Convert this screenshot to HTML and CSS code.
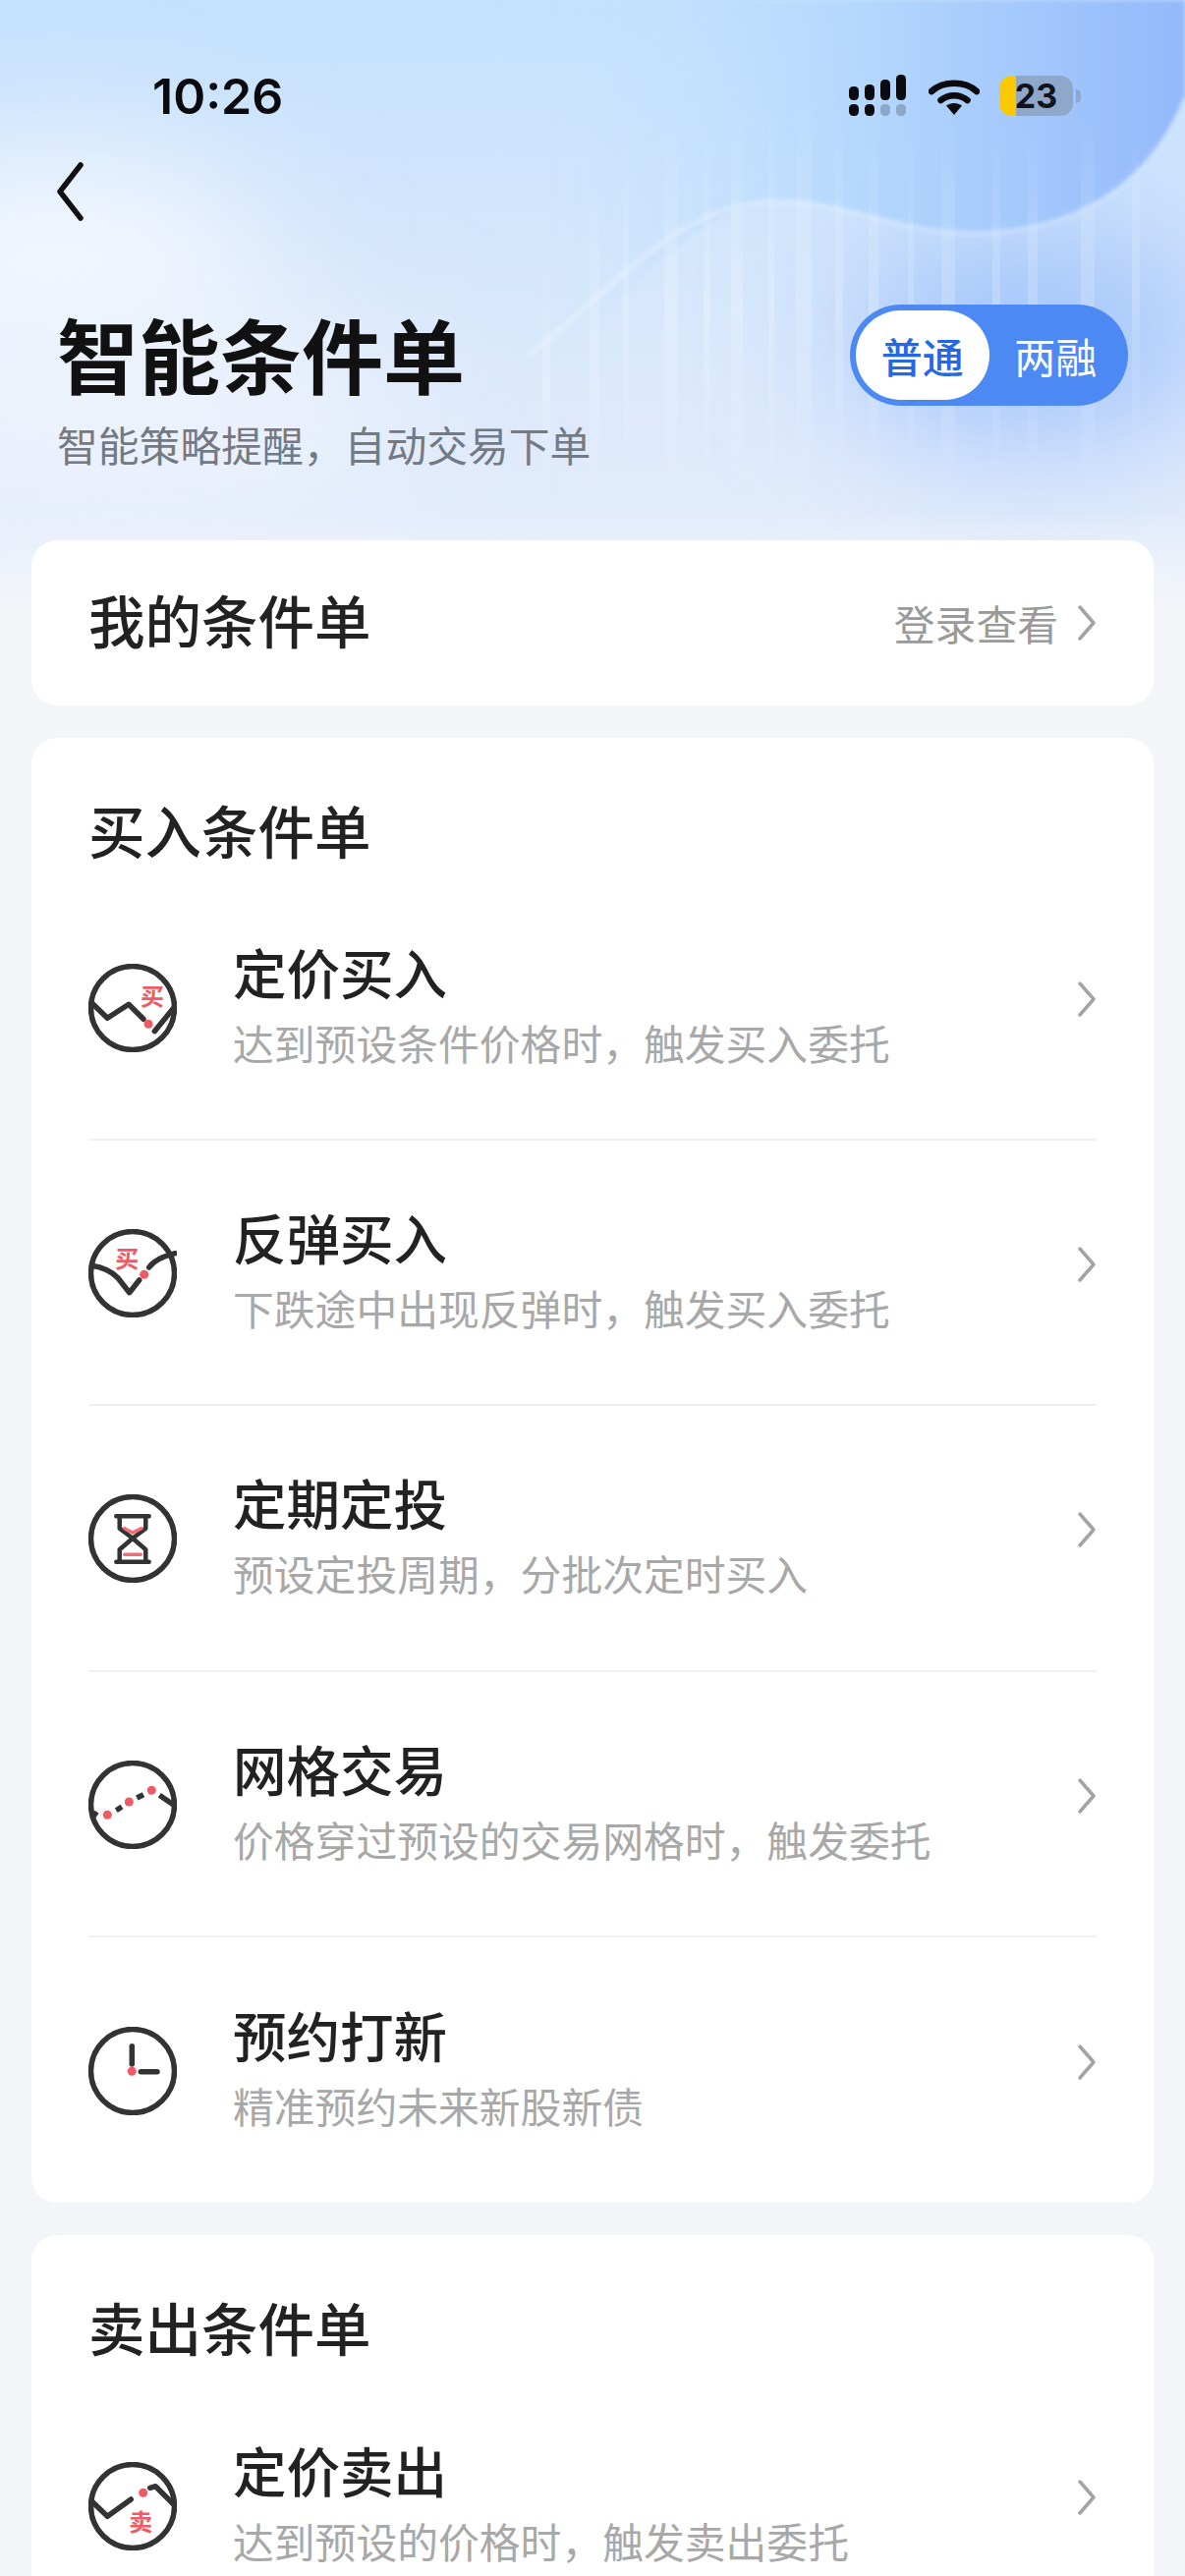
FILE: index.html
```html
<!DOCTYPE html>
<html lang="zh-CN">
<head>
  <meta charset="UTF-8">
  <title>智能条件单</title>
  <link rel="stylesheet" href="styles.css">
</head>
<body>
  <svg class="hero-bg" width="1206" height="640" viewBox="0 0 1206 640">
    <defs>
      <linearGradient id="base" x1="0" y1="0" x2="0" y2="1">
        <stop offset="0" stop-color="#c4e1fc"/>
        <stop offset="0.3" stop-color="#d0e5fc"/>
        <stop offset="0.62" stop-color="#dce9fb"/>
        <stop offset="1" stop-color="#e6eefb"/>
      </linearGradient>
      <linearGradient id="corner" x1="0" y1="0" x2="1" y2="0">
        <stop offset="0" stop-color="#c6e3fe" stop-opacity="0"/>
        <stop offset="0.55" stop-color="#b0d4fd"/>
        <stop offset="1" stop-color="#93b9fb"/>
      </linearGradient>
      <linearGradient id="stripe" x1="0" y1="0" x2="0" y2="1">
        <stop offset="0" stop-color="#fff" stop-opacity="0"/>
        <stop offset="0.5" stop-color="#fff" stop-opacity="0.2"/>
        <stop offset="1" stop-color="#fff" stop-opacity="0"/>
      </linearGradient>
      <linearGradient id="fadeout" x1="0" y1="0" x2="0" y2="1">
        <stop offset="0" stop-color="#f4f5f9" stop-opacity="0"/>
        <stop offset="1" stop-color="#f4f5f9"/>
      </linearGradient>
      <filter id="blur80" filterUnits="userSpaceOnUse" x="-400" y="-400" width="2000" height="1400"><feGaussianBlur stdDeviation="70"/></filter>
      <filter id="blur2" filterUnits="userSpaceOnUse" x="-50" y="-50" width="1300" height="700"><feGaussianBlur stdDeviation="2"/></filter>
    </defs>
    <rect width="1206" height="640" fill="url(#base)"/>
    <ellipse cx="60" cy="270" rx="210" ry="110" fill="#f4f8ff" filter="url(#blur80)"/>
    <ellipse cx="120" cy="420" rx="300" ry="100" fill="#eef3fc" filter="url(#blur80)"/>
    <ellipse cx="1050" cy="340" rx="190" ry="110" fill="#a3c4fb" filter="url(#blur80)"/>
    <path d="M560 0H1206V100C1170 190 1090 240 980 237C910 235 860 205 792 205C720 205 660 280 600 340L560 340Z" fill="url(#corner)" filter="url(#blur2)"/>
    <path d="M540 360C630 290 690 205 792 205C860 205 910 235 980 237C1090 240 1170 190 1206 100" fill="none" stroke="#fff" stroke-opacity="0.28" stroke-width="5" filter="url(#blur2)"/>
    <g fill="url(#stripe)">
      <rect x="552" y="270" width="8" height="240"/>
      <rect x="600" y="180" width="10" height="340"/>
      <rect x="634" y="130" width="6" height="380"/>
      <rect x="676" y="120" width="14" height="380"/>
      <rect x="716" y="110" width="7" height="400"/>
      <rect x="744" y="100" width="12" height="420"/>
      <rect x="782" y="100" width="6" height="420"/>
      <rect x="810" y="90" width="16" height="430"/>
      <rect x="850" y="110" width="8" height="400"/>
      <rect x="884" y="120" width="10" height="380"/>
      <rect x="924" y="130" width="6" height="370"/>
      <rect x="958" y="120" width="14" height="400"/>
      <rect x="1010" y="130" width="8" height="370"/>
      <rect x="1046" y="120" width="10" height="380"/>
      <rect x="1100" y="110" width="14" height="400"/>
      <rect x="1152" y="130" width="8" height="340"/>
    </g>
    <rect y="520" width="1206" height="100" fill="url(#fadeout)"/>
    <rect y="620" width="1206" height="20" fill="#f4f5f9"/>
  </svg>

  <div class="status-bar">
    <span class="clock">10:26</span>
    <div class="status-icons">
      <svg class="signal" width="58" height="44" viewBox="0 0 58 44">
        <g fill="#0b0b0f">
          <rect x="0" y="12" width="10" height="14" rx="4.5"/>
          <rect x="16" y="10" width="10" height="16" rx="4.5"/>
          <rect x="32" y="5" width="10" height="21" rx="4.5"/>
          <rect x="48" y="0" width="10" height="26" rx="4.5"/>
          <rect x="0" y="30" width="10" height="12" rx="4.5"/>
          <rect x="16" y="30" width="10" height="12" rx="4.5"/>
        </g>
        <g fill="#0b0b0f" opacity="0.22">
          <rect x="32" y="30" width="10" height="12" rx="4.5"/>
          <rect x="48" y="30" width="10" height="12" rx="4.5"/>
        </g>
      </svg>
      <svg class="wifi" width="52" height="38" viewBox="0 0 52 38">
        <path d="M3 14C15 3 37 3 49 14" fill="none" stroke="#0b0b0f" stroke-width="6.5" stroke-linecap="round"/>
        <path d="M12.500 23C20 16.500 32 16.500 39.500 23" fill="none" stroke="#0b0b0f" stroke-width="6.500" stroke-linecap="round"/>
        <path d="M18 28.500C22.500 25 29.500 25 34 28.500L26 38Z" fill="#0b0b0f"/>
      </svg>
      <div class="battery"><span class="battery-num">23</span></div>
      <span class="battery-tip"></span>
    </div>
  </div>

  <div class="nav-bar">
    <svg width="30" height="60" viewBox="0 0 30 60">
      <path d="M26 3L5 30L26 57" fill="none" stroke="#111" stroke-width="5.500" stroke-linecap="round" stroke-linejoin="round"/>
    </svg>
  </div>

  <header class="hero">
    <div class="hero-text">
      <h1 class="hero-title">智能条件单</h1>
      <p class="hero-sub">智能策略提醒，自动交易下单</p>
    </div>
    <div class="toggle">
      <span class="toggle-item active">普通</span>
      <span class="toggle-item">两融</span>
    </div>
  </header>

  <main class="content">
    <section class="card my-card">
      <h2 class="card-title">我的条件单</h2>
      <div class="login-link">
        <span>登录查看</span>
        <svg class="chevron" width="20" height="38" viewBox="0 0 20 38"><path d="M3 3L17 19L3 35"/></svg>
      </div>
    </section>

    <section class="card">
      <h2 class="card-title list-title">买入条件单</h2>

      <div class="row">
        <svg class="row-icon" width="90" height="90" viewBox="0 0 90 90">
          <circle class="ring" cx="45" cy="45" r="42.500"/>
          <path class="line" d="M3.300 39.700L19.300 55.300L41 41.300L56 56.300M67.300 68.700L88.300 43"/>
          <circle class="dot" cx="61" cy="61.300" r="4.500"/>
          <text class="mark" x="65" y="41.500">买</text>
        </svg>
        <div class="row-text">
          <div class="row-title">定价买入</div>
          <div class="row-sub">达到预设条件价格时，触发买入委托</div>
        </div>
        <svg class="chevron" width="20" height="38" viewBox="0 0 20 38"><path d="M3 3L17 19L3 35"/></svg>
      </div>

      <div class="row">
        <svg class="row-icon" width="90" height="90" viewBox="0 0 90 90">
          <circle class="ring" cx="45" cy="45" r="42.500"/>
          <path class="line" d="M3.300 37.300Q20 39.700 30 49.700L41.700 64.700L51.700 52M61.700 39Q68.300 29.700 88.300 24.700"/>
          <circle class="dot" cx="56.700" cy="46.300" r="4.500"/>
          <text class="mark" x="39.300" y="39">买</text>
        </svg>
        <div class="row-text">
          <div class="row-title">反弹买入</div>
          <div class="row-sub">下跌途中出现反弹时，触发买入委托</div>
        </div>
        <svg class="chevron" width="20" height="38" viewBox="0 0 20 38"><path d="M3 3L17 19L3 35"/></svg>
      </div>

      <div class="row">
        <svg class="row-icon" width="90" height="90" viewBox="0 0 90 90">
          <circle class="ring" cx="45" cy="45" r="42.500"/>
          <path class="line thin" d="M28.300 22.300H61.700M28.300 68.700H61.700M31.700 22.300V34.700L45 44.700L58.300 34.700V22.300M31.700 68.700V56.300L45 44.700L58.300 56.300V68.700"/>
          <path class="red-line" d="M36.700 34.700L45 39L54 34.700M36.700 61.300H53.300"/>
        </svg>
        <div class="row-text">
          <div class="row-title">定期定投</div>
          <div class="row-sub">预设定投周期，分批次定时买入</div>
        </div>
        <svg class="chevron" width="20" height="38" viewBox="0 0 20 38"><path d="M3 3L17 19L3 35"/></svg>
      </div>

      <div class="row">
        <svg class="row-icon" width="90" height="90" viewBox="0 0 90 90">
          <circle class="ring" cx="45" cy="45" r="42.500"/>
          <path class="line butt" d="M5 53L9 56M28.300 50.700L34 47M49.300 38L56 34.700M72.300 35.300L88.300 46.300"/>
          <circle class="dot" cx="19.300" cy="55.300" r="4.500"/>
          <circle class="dot" cx="41.300" cy="42" r="4.500"/>
          <circle class="dot" cx="64.300" cy="30.300" r="4.500"/>
        </svg>
        <div class="row-text">
          <div class="row-title">网格交易</div>
          <div class="row-sub">价格穿过预设的交易网格时，触发委托</div>
        </div>
        <svg class="chevron" width="20" height="38" viewBox="0 0 20 38"><path d="M3 3L17 19L3 35"/></svg>
      </div>

      <div class="row">
        <svg class="row-icon" width="90" height="90" viewBox="0 0 90 90">
          <circle class="ring" cx="45" cy="45" r="42.500"/>
          <path class="line" d="M44.300 19.700V38M53.300 45.700H70"/>
          <circle class="dot" cx="44.300" cy="45.300" r="4.500"/>
        </svg>
        <div class="row-text">
          <div class="row-title">预约打新</div>
          <div class="row-sub">精准预约未来新股新债</div>
        </div>
        <svg class="chevron" width="20" height="38" viewBox="0 0 20 38"><path d="M3 3L17 19L3 35"/></svg>
      </div>
    </section>

    <section class="card">
      <h2 class="card-title list-title">卖出条件单</h2>

      <div class="row">
        <svg class="row-icon" width="90" height="90" viewBox="0 0 90 90">
          <circle class="ring" cx="45" cy="45" r="42.500"/>
          <path class="line" d="M3.300 39.700L19.300 55.300L43.300 38M62.700 26.300L68.300 24.700L88.300 44.700"/>
          <circle class="dot" cx="55.700" cy="31.300" r="4.500"/>
          <text class="mark" x="53.300" y="70">卖</text>
        </svg>
        <div class="row-text">
          <div class="row-title">定价卖出</div>
          <div class="row-sub">达到预设的价格时，触发卖出委托</div>
        </div>
        <svg class="chevron" width="20" height="38" viewBox="0 0 20 38"><path d="M3 3L17 19L3 35"/></svg>
      </div>
    </section>
  </main>
</body>
</html>
```

FILE: styles.css
```css
* {
  box-sizing: border-box;
}

html, body {
  height: 2622px;
  overflow: hidden;
}

body {
  margin: 0;
  background-color: #f4f5f9;
  color: #222;
  font-family: "Noto Sans CJK SC", "Noto Sans", sans-serif;
}

.hero-bg {
  position: absolute;
  top: 0;
  left: 0;
  z-index: -1;
}

/* status bar */
.status-bar {
  display: flex;
  justify-content: space-between;
  align-items: center;
  height: 45px;
  margin-top: 75px;
  padding: 0 106px 0 155px;
}

.clock {
  font-family: Inter, sans-serif;
  font-size: 50px;
  font-weight: 600;
  letter-spacing: 0;
  color: #0b0b0f;
}

.status-icons {
  display: flex;
  align-items: center;
}

.wifi {
  margin-left: 23px;
}

.battery {
  display: flex;
  justify-content: center;
  align-items: center;
  width: 75px;
  height: 41px;
  margin-left: 20px;
  border-radius: 13px;
  background: linear-gradient(to right, #fcc900 17px, #8fa8ca 17px);
}

.battery-num {
  font-family: Inter, sans-serif;
  font-size: 34px;
  font-weight: 700;
  line-height: 1;
  color: #10131c;
}

.battery-tip {
  width: 5px;
  height: 14px;
  margin-left: 3px;
  border-radius: 0 5px 5px 0;
  background-color: #8fa8ca;
}

/* nav and title */
.nav-bar {
  display: flex;
  height: 74px;
  margin-top: 45px;
  padding-left: 56px;
}

.hero {
  display: flex;
  justify-content: space-between;
  align-items: flex-start;
  height: 311px;
  padding: 70px 58px 0;
}

.hero-title {
  margin: 0;
  font-size: 83px;
  font-weight: 700;
  line-height: 100px;
  color: #111;
}

.hero-sub {
  margin: 14px 0 0;
  font-size: 41.800px;
  line-height: 58px;
  color: #747a84;
}

.toggle {
  display: flex;
  align-items: center;
  width: 283px;
  height: 103px;
  margin-top: 1px;
  padding: 6px;
  border-radius: 52px;
  background-color: #4c89f3;
}

.toggle-item {
  display: flex;
  justify-content: center;
  align-items: center;
  width: 136px;
  height: 91px;
  font-size: 42px;
  color: #fff;
}

.active {
  border-radius: 46px;
  background-color: #fff;
  color: #2468e4;
  font-weight: 500;
}

/* cards */
.content {
  display: flex;
  flex-direction: column;
  gap: 33px;
  padding: 0 32px;
}

.card {
  padding: 0 58px;
  border-radius: 26px;
  background-color: #fff;
}

.my-card {
  display: flex;
  justify-content: space-between;
  align-items: center;
  height: 168px;
}

.my-card .card-title {
  margin-bottom: 8px;
}

.card-title {
  margin: 0;
  font-size: 57.500px;
  font-weight: 500;
  line-height: 80px;
  color: #222;
}

.list-title {
  padding-top: 53px;
  padding-bottom: 7px;
  box-sizing: content-box;
}

.login-link {
  display: flex;
  align-items: center;
  gap: 19px;
  font-size: 41.800px;
  color: #9a9a9a;
}

.chevron {
  flex: none;
  fill: none;
  stroke: #a3a3a3;
  stroke-width: 3.5;
  stroke-linecap: round;
  stroke-linejoin: round;
}

/* list rows */
.row {
  display: flex;
  align-items: center;
  height: 270.200px;
  border-bottom: 2px solid #f0f0f2;
}

.row:last-child {
  border-bottom: none;
}

.row-icon {
  flex: none;
  margin-top: 2px;
  margin-right: 58px;
}

.row-text {
  flex: 1;
  margin-bottom: 6px;
  margin-left: -1px;
}

.row .chevron {
  margin-bottom: 16px;
}

.row-title {
  font-size: 54.500px;
  font-weight: 500;
  line-height: 70px;
  color: #222;
}

.row-sub {
  font-size: 41.800px;
  line-height: 58px;
  margin-top: 8px;
  color: #a8a8a8;
}

/* icon parts */
.ring, .line, .red-line {
  fill: none;
  stroke: #333;
  stroke-width: 5.500;
  stroke-linecap: round;
  stroke-linejoin: round;
}

.thin {
  stroke-width: 4.500;
}

.butt {
  stroke-linecap: butt;
}

.red-line {
  stroke: #ef6f76;
  stroke-width: 3.500;
}

.dot {
  fill: #ef5a64;
}

.mark {
  fill: #ef5a64;
  font-size: 24px;
  font-weight: 700;
  text-anchor: middle;
}
```
